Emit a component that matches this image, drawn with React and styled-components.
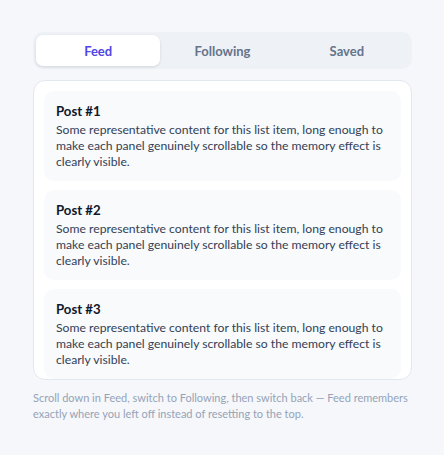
import React, { useState } from "react";
import styled, { createGlobalStyle } from "styled-components";

const Global = createGlobalStyle`
  html, body { margin: 0; padding: 0; background: #f6f7fa; }
  body { font-family: "Segoe UI", Lato, "Noto Sans", sans-serif; }
  * { box-sizing: border-box; }
`;

const Page = styled.div`
  width: 444px;
  height: 455px;
  padding: 32px 32px 0 33px;
  display: flex;
  flex-direction: column;
`;

const TabBar = styled.div`
  display: grid;
  grid-template-columns: repeat(3, 1fr);
  padding: 3px;
  height: 37px;
  background: #eef1f6;
  border-radius: 10px;
`;

const Tab = styled.button`
  border: none;
  background: ${(p) => (p.$active ? "#ffffff" : "transparent")};
  box-shadow: ${(p) => (p.$active ? "0 1px 3px rgba(15,23,42,0.12)" : "none")};
  border-radius: 7px;
  font-family: inherit;
  font-size: 13px;
  font-weight: 700;
  color: ${(p) => (p.$active ? "#4f46e5" : "#64748b")};
  cursor: pointer;
  padding: 0;
`;

const Panel = styled.div`
  margin-top: 11px;
  height: 300px;
  background: #ffffff;
  border: 1px solid #e2e8f0;
  border-radius: 12px;
  padding: 10px 10px 0;
  overflow: hidden;
  display: flex;
  flex-direction: column;
  gap: 9px;
`;

const Card = styled.div`
  flex-shrink: 0;
  background: #f8fafc;
  border-radius: 10px;
  padding: 11px 12px 11px;
`;

const Title = styled.div`
  font-size: 13.2px;
  font-weight: 700;
  color: #0f172a;
  line-height: 18px;
  margin-bottom: 2px;
`;

const Body = styled.div`
  font-size: 12.2px;
  line-height: 16px;
  color: #334155;
`;

const Hint = styled.p`
  margin: 10px 0 0;
  font-size: 11px;
  line-height: 16px;
  color: #94a3b8;
`;

const text =
  "Some representative content for this list item, long enough to make each panel genuinely scrollable so the memory effect is clearly visible.";

export default function App() {
  const [tab, setTab] = useState("Feed");
  return (
    <>
      <Global />
      <Page>
        <TabBar>
          {["Feed", "Following", "Saved"].map((t) => (
            <Tab key={t} $active={tab === t} onClick={() => setTab(t)}>
              {t}
            </Tab>
          ))}
        </TabBar>
        <Panel>
          {[1, 2, 3].map((n) => (
            <Card key={n}>
              <Title>Post #{n}</Title>
              <Body>{text}</Body>
            </Card>
          ))}
        </Panel>
        <Hint>
          Scroll down in Feed, switch to Following, then switch back — Feed remembers
          exactly where you left off instead of resetting to the top.
        </Hint>
      </Page>
    </>
  );
}
